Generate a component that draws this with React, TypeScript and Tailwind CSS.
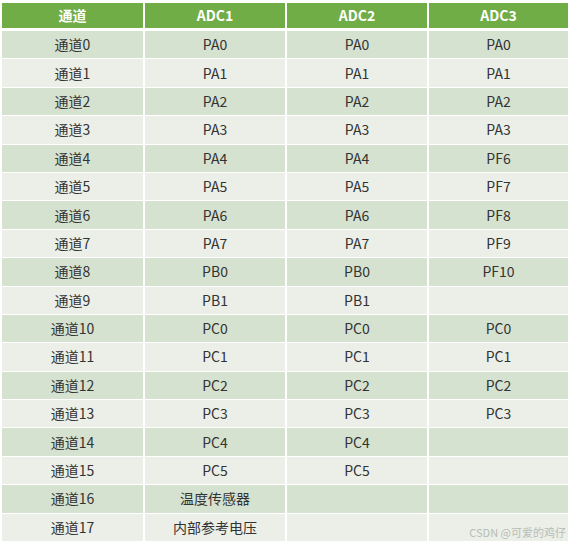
const HEAD = ["通道", "ADC1", "ADC2", "ADC3"];

// 每行：通道名, ADC1, ADC2, ADC3
const ROWS: string[][] = [
  ["通道0", "PA0", "PA0", "PA0"],
  ["通道1", "PA1", "PA1", "PA1"],
  ["通道2", "PA2", "PA2", "PA2"],
  ["通道3", "PA3", "PA3", "PA3"],
  ["通道4", "PA4", "PA4", "PF6"],
  ["通道5", "PA5", "PA5", "PF7"],
  ["通道6", "PA6", "PA6", "PF8"],
  ["通道7", "PA7", "PA7", "PF9"],
  ["通道8", "PB0", "PB0", "PF10"],
  ["通道9", "PB1", "PB1", ""],
  ["通道10", "PC0", "PC0", "PC0"],
  ["通道11", "PC1", "PC1", "PC1"],
  ["通道12", "PC2", "PC2", "PC2"],
  ["通道13", "PC3", "PC3", "PC3"],
  ["通道14", "PC4", "PC4", ""],
  ["通道15", "PC5", "PC5", ""],
  ["通道16", "温度传感器", "", ""],
  ["通道17", "内部参考电压", "", ""],
];

const COLS = "grid grid-cols-[141px_140px_140px_139px] gap-x-[2px]";

export default function App() {
  return (
    <div
      className="relative w-[570px] h-[544px] bg-white pl-[2px] pt-[3px] text-[14px] text-[#333333]"
      style={{ fontFamily: '"Noto Sans CJK SC", "Noto Sans", sans-serif' }}
    >
      {/* 表头 */}
      <div className={`${COLS} h-[25px] mb-[3px]`}>
        {HEAD.map((h) => (
          <div key={h} className="flex items-center justify-center bg-[#70ad47] font-bold text-white">
            {h}
          </div>
        ))}
      </div>

      {/* 数据行 */}
      <div className="flex flex-col gap-y-[1px]">
        {ROWS.map((row, i) => (
          <div key={row[0]} className={`${COLS} h-[27.4px]`}>
            {row.map((cell, j) => (
              <div
                key={j}
                className={`flex items-center justify-center ${i % 2 === 0 ? "bg-[#d6e2d0]" : "bg-[#ebefe8]"}`}
              >
                {cell}
              </div>
            ))}
          </div>
        ))}
      </div>

      {/* 水印 */}
      <div className="absolute right-[4px] bottom-[4px] text-[11px] text-[#b8bcb6]">CSDN @可爱的鸡仔</div>
    </div>
  );
}
